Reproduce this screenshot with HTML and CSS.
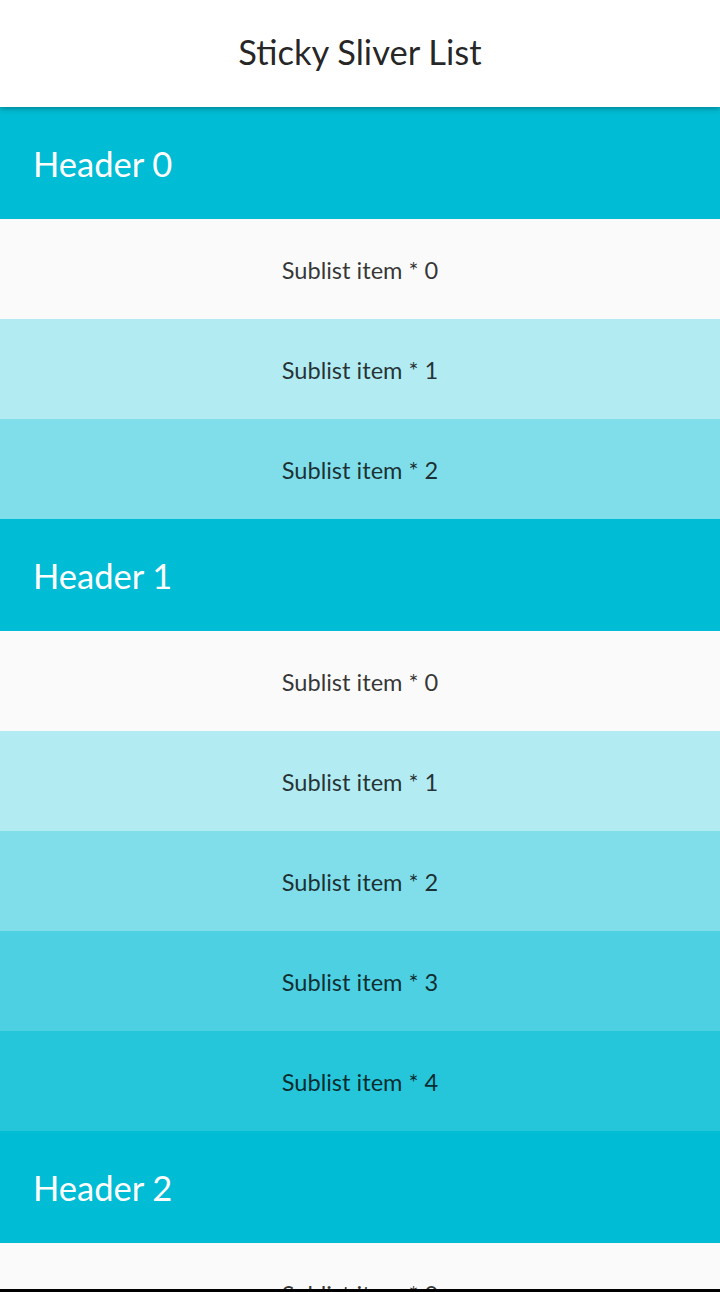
FILE: index.html
```html
<!DOCTYPE html>
<html>
<head>
<meta charset="utf-8">
<link rel="stylesheet" href="styles.css">
</head>
<body>
<div class="screen">
  <div class="viewport">
    <header class="appbar"><h1 class="title">Sticky Sliver List</h1></header>
    <div class="list">
      <div class="section-header">Header 0</div>
      <div class="item c0">Sublist item * 0</div>
      <div class="item c1">Sublist item * 1</div>
      <div class="item c2">Sublist item * 2</div>
      <div class="section-header">Header 1</div>
      <div class="item c0">Sublist item * 0</div>
      <div class="item c1">Sublist item * 1</div>
      <div class="item c2">Sublist item * 2</div>
      <div class="item c3">Sublist item * 3</div>
      <div class="item c4">Sublist item * 4</div>
      <div class="section-header">Header 2</div>
      <div class="item c0">Sublist item * 0</div>
      <div class="item c1">Sublist item * 1</div>
    </div>
  </div>
  <div class="navline"></div>
</div>
</body>
</html>
```
FILE: styles.css
```css
* {
  box-sizing: border-box;
}
html, body {
  margin: 0;
  padding: 0;
  background: #fafafa;
}
.screen {
  width: 720px;
  height: 1292px;
  display: flex;
  flex-direction: column;
  overflow: hidden;
  font-family: Lato, "Noto Sans", sans-serif;
}
.viewport {
  height: 1289px;
  flex: 0 0 1289px;
  overflow: hidden;
  display: flex;
  flex-direction: column;
}
.appbar {
  height: 107px;
  flex: 0 0 107px;
  background: #ffffff;
  display: flex;
  align-items: center;
  justify-content: center;
  position: relative;
  z-index: 2;
  box-shadow: 0 2px 5px rgba(0,0,0,0.28);
}
.title {
  margin: 0;
  font-weight: 400;
  font-size: 34.5px;
  color: rgba(0,0,0,0.87);
  padding-bottom: 5px;
}
.list {
  display: flex;
  flex-direction: column;
}
.section-header {
  height: 112px;
  flex: 0 0 112px;
  background: #00bcd4;
  color: #ffffff;
  font-size: 34.5px;
  display: flex;
  align-items: center;
  padding-left: 33px;
}
.item {
  height: 100px;
  flex: 0 0 100px;
  display: flex;
  align-items: center;
  justify-content: center;
  font-size: 23.6px;
  color: rgba(0,0,0,0.8);
  padding-top: 1px;
}
.c0 { background: #fafafa; }
.c1 { background: #b2ebf2; }
.c2 { background: #80deea; }
.c3 { background: #4dd0e1; }
.c4 { background: #26c6da; }
.navline {
  height: 3px;
  flex: 0 0 3px;
  background: #000;
}
```
